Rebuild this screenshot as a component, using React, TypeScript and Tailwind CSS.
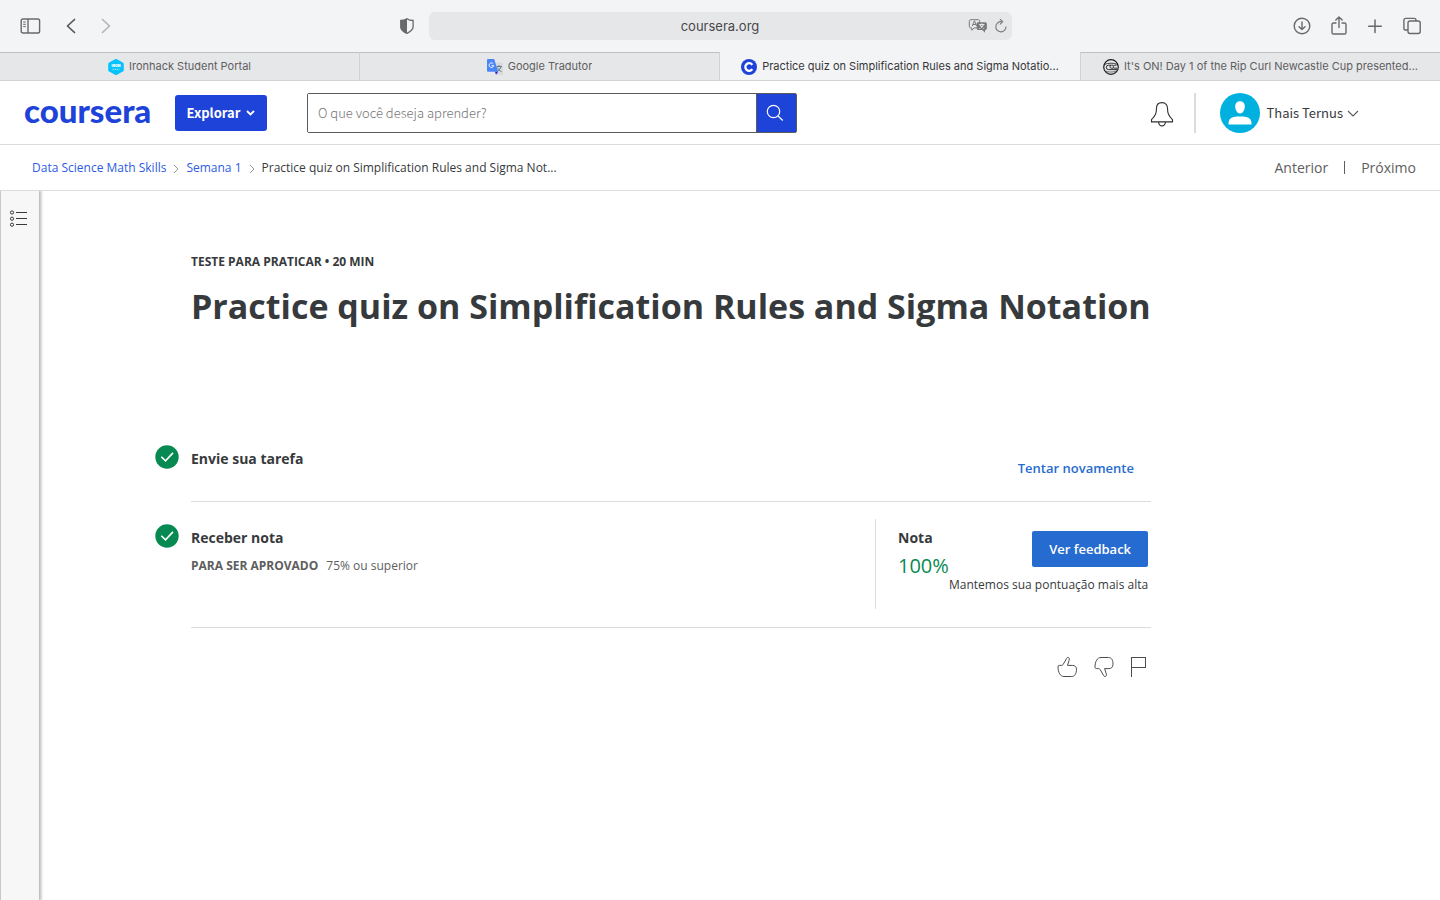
import type { ReactNode } from "react";

const openSans = "font-['Open_Sans','Noto_Sans',sans-serif]";
const sourceSans = "font-['Noto_Sans_CJK_JP','Open_Sans',sans-serif]";
const systemFont = "font-['Inter','Roboto',sans-serif]";

function IconButton({ label, className = "", children }: { label: string; className?: string; children: ReactNode }) {
  return (
    <button type="button" aria-label={label} className={`flex shrink-0 items-center justify-center ${className}`}>
      {children}
    </button>
  );
}

function Toolbar() {
  return (
    <div className="grid h-13 grid-cols-[1fr_583px_1fr] items-center bg-[#f3f4f6] px-5 text-[#69696b]">
      <div className="flex items-center pr-3.5">
        <IconButton label="Barra lateral">
          <svg width="21" height="16" viewBox="0 0 21 16" fill="none" stroke="currentColor" strokeWidth="1.4">
            <rect x="1.2" y="1" width="18.4" height="14" rx="1.8" />
            <path d="M8 1v14" />
            <path d="M3.2 4h2.6M3.2 6.3h2.6M3.2 8.6h2.6" strokeWidth="1" />
          </svg>
        </IconButton>
        <IconButton label="Voltar" className="ml-6">
          <svg width="12" height="16" viewBox="0 0 12 16" fill="none" stroke="#555" strokeWidth="1.7" strokeLinecap="round" strokeLinejoin="round">
            <path d="M9.5 1.5 2.5 8l7 6.5" />
          </svg>
        </IconButton>
        <IconButton label="Avançar" className="ml-6">
          <svg width="12" height="16" viewBox="0 0 12 16" fill="none" stroke="#b4b5b7" strokeWidth="1.7" strokeLinecap="round" strokeLinejoin="round">
            <path d="m1.5 1.5 7 6.5-7 6.5" />
          </svg>
        </IconButton>
        <IconButton label="Relatório de privacidade" className="ml-auto">
          <svg width="16" height="18" viewBox="0 0 16 18">
            <path d="M8 1.7C6.3 3 4.2 3.5 1.9 3.5v6.3c0 3 2.6 4.9 6.1 6.6 3.5-1.7 6.1-3.6 6.1-6.6V3.5C11.8 3.5 9.7 3 8 1.7Z" fill="none" stroke="currentColor" strokeWidth="1.3" />
            <path d="M8 1.2C6.3 2.6 4 3 1.3 3v7c0 3.2 3 5.3 6.7 7Z" fill="currentColor" />
          </svg>
        </IconButton>
      </div>
      <div className="relative flex h-7 items-center rounded-md bg-[#e6e7e9]">
        <input
          type="text"
          aria-label="Endereço"
          defaultValue="coursera.org"
          className="h-7 w-full bg-transparent text-center text-[13px] leading-5 text-[#48484a] outline-none"
        />
        <div className="absolute right-1 flex items-center gap-1.5 text-[#7a7a7c]">
          <IconButton label="Traduzir">
            <svg width="20" height="16" viewBox="0 0 20 16">
              <path d="M2.8 1.7h7.4c1 0 1.5.5 1.5 1.5v5.2c0 1-.5 1.5-1.5 1.5H6.3L3.8 12.200V9.9H2.8c-1 0-1.5-.5-1.5-1.5V3.2c0-1 .5-1.5 1.5-1.5Z" fill="none" stroke="currentColor" />
              <path d="m4.3 8 2.2-5.2L8.7 8M5 6.500h3" fill="none" stroke="currentColor" />
              <path d="M10 4.300h7c1.2 0 1.900.6 1.900 1.800v4.200c0 1.200-.7 1.800-1.900 1.800v2.600l-2.700-2.600H10.500c-1.200 0-1.800-.6-1.800-1.800V6.100c0-1.200.5-1.800 1.300-1.800Z" fill="currentColor" />
              <path d="M11.200 6.500h5.200M13.800 5.500v1M15.500 6.600c-.6 1.900-2 3.300-4.200 4M12 6.700c.6 1.900 2.200 3.200 4.200 3.900" fill="none" stroke="#e6e7e9" strokeWidth="1.1" />
            </svg>
          </IconButton>
          <IconButton label="Recarregar">
            <svg width="14" height="16" viewBox="0 0 14 16" fill="none" stroke="currentColor" strokeWidth="1.1" strokeLinecap="round" strokeLinejoin="round">
              <path d="M7.400 3.700A5.100 5.100 0 1 0 12 8.800" />
              <path d="m6.200 1.300 2.500 2.400-2.500 2.500" />
            </svg>
          </IconButton>
        </div>
      </div>
      <div className="-mr-0.5 flex items-center justify-end gap-[18px] pb-px">
        <IconButton label="Downloads">
          <svg width="20" height="20" viewBox="0 0 20 20" fill="none" stroke="currentColor" strokeWidth="1.4" strokeLinecap="round" strokeLinejoin="round">
            <circle cx="10" cy="10" r="7.8" />
            <path d="M10 6v7.500M7 10.700l3 2.900 3-2.900" />
          </svg>
        </IconButton>
        <IconButton label="Compartilhar">
          <svg width="18" height="22" viewBox="0 0 18 22" fill="none" stroke="currentColor" strokeWidth="1.4" strokeLinecap="round" strokeLinejoin="round">
            <path d="M6 8H3.600C2.600 8 2 8.600 2 9.600v7.800c0 1 .6 1.600 1.600 1.600h10.800c1 0 1.600-.6 1.600-1.600V9.600c0-1-.6-1.600-1.600-1.600H12M9 12.500V2.200M5.800 5 9 1.900 12.200 5" />
          </svg>
        </IconButton>
        <IconButton label="Nova aba">
          <svg width="18" height="18" viewBox="0 0 18 18" fill="none" stroke="currentColor" strokeWidth="1.5" strokeLinecap="round">
            <path d="M9 3v12.500M2.700 9.200h12.600" />
          </svg>
        </IconButton>
        <IconButton label="Visão geral das abas">
          <svg width="20" height="18" viewBox="0 0 20 18" fill="none" stroke="currentColor" strokeWidth="1.4">
            <rect x="6" y="4" width="12.200" height="12.500" rx="2" />
            <path d="M6 13H3.700c-1.200 0-1.800-.7-1.800-1.800V3.300c0-1.200.7-1.900 1.900-1.900h8.300c1.200 0 1.900.7 1.900 1.900V4" />
          </svg>
        </IconButton>
      </div>
    </div>
  );
}

function IronhackIcon() {
  return (
    <svg width="16" height="16" viewBox="0 0 16 16" className="shrink-0" aria-hidden="true">
      <path d="M7 .3q1-.5 2 0l5.800 3.200q1 .6 1 1.600v5.800q0 1-1 1.600L9 15.700q-1 .5-2 0l-5.800-3.200q-1-.6-1-1.600V5.100q0-1 1-1.600Z" fill="#06c3fb" />
      <text x="8" y="7.500" fill="#fff" fontFamily="Inter" fontSize="3.500" fontWeight="900" textAnchor="middle">IRON</text>
      <path d="M4.500 10.300h7" stroke="#9be7ff" strokeDasharray="1.5 .6" />
    </svg>
  );
}

function TranslateIcon() {
  return (
    <svg width="16" height="16" viewBox="0 0 16 16" className="shrink-0" aria-hidden="true">
      <path d="M6 3.500h9a1 1 0 0 1 1 1V15a1 1 0 0 1-1 1H9Z" fill="#d8dadc" />
      <path d="M9.500 7.500h5.500M12 6v1.500M14 7.500c-.6 2.300-2 4-4 5M10.500 8.500c.8 2 2 3.200 4 4" fill="none" stroke="#607d8b" />
      <path d="M1 0h6.200l4 12.800H1a1 1 0 0 1-1-1V1a1 1 0 0 1 1-1Z" fill="#4a86f7" />
      <path d="M8 12.800h3.200L9 15.800Z" fill="#3822d1" />
      <path d="M6.300 4.800A2.300 2.300 0 1 0 6.700 6.700H4.700" fill="none" stroke="#fff" strokeWidth="1" />
    </svg>
  );
}

function CourseraIcon() {
  return (
    <svg width="16" height="16" viewBox="0 0 16 16" className="shrink-0" aria-hidden="true">
      <circle cx="8" cy="8" r="8" fill="#1d43d8" />
      <path d="M11.300 5.900A3.800 3.800 0 1 0 11.300 10.100" fill="none" stroke="#fff" strokeWidth="2.3" />
    </svg>
  );
}

function LeagueIcon() {
  return (
    <svg width="16" height="16" viewBox="0 0 16 16" fill="none" stroke="#1c1c1e" className="shrink-0" aria-hidden="true">
      <circle cx="8" cy="8" r="7.300" strokeWidth="1.2" />
      <path d="M1.500 5.400C5 3.800 11 3.800 14.500 5.400" strokeWidth=".8" />
      <path d="M8 6.200H5.500a2.200 2.200 0 0 0 0 4.400H14M10.300 6.200H8.500a1.500 1.500 0 0 0 0 3h1.800M13.500 6.200h-1.700a1.500 1.500 0 0 0 0 3H14" strokeWidth=".9" />
      <path d="M2.500 12c2 1.300 8 1.500 11 0" strokeWidth=".6" />
    </svg>
  );
}

const tabs = [
  { title: "Ironhack Student Portal", icon: <IronhackIcon />, active: false },
  { title: "Google Tradutor", icon: <TranslateIcon />, active: false },
  { title: "Practice quiz on Simplification Rules and Sigma Notatio...", icon: <CourseraIcon />, active: true },
  { title: "It's ON! Day 1 of the Rip Curl Newcastle Cup presented...", icon: <LeagueIcon />, active: false },
];

function TabBar() {
  return (
    <div role="tablist" className="grid h-[29px] grid-cols-4 border-b border-[#d2d3d5]">
      {tabs.map((tab) => (
        <button
          key={tab.title}
          type="button"
          role="tab"
          aria-selected={tab.active}
          className={`flex min-w-0 items-center justify-center gap-[5px] border-t px-3 text-[11px] ${
            tab.active
              ? "border-[#f3f4f6] bg-[#f3f4f6] text-[#363638]"
              : "border-r border-t-[#bfc0c2] border-r-[#d0d1d3] bg-[#e6e7e9] text-[#5e5e60] last:border-r-0 last:border-l last:border-l-[#d0d1d3]"
          }`}
        >
          {tab.icon}
          <span className="truncate">{tab.title}</span>
        </button>
      ))}
    </div>
  );
}

function Header() {
  return (
    <header className={`flex h-16 items-center border-b border-[#dcdcdc] px-6 ${sourceSans}`}>
      <a href="#inicio" className="w-32 shrink-0 pb-1.5 font-['Lato',sans-serif] text-[33px] leading-8 font-black text-[#1d43d8]">
        coursera
      </a>
      <button type="button" className="ml-[23px] flex h-9 w-[92px] shrink-0 items-center justify-center gap-1.5 rounded-[3px] bg-[#1d43d8] text-[13px] font-bold text-white">
        Explorar
        <svg width="9" height="6" viewBox="0 0 9 6" fill="none" stroke="currentColor" strokeWidth="1.8" aria-hidden="true">
          <path d="m1 1 3.500 3.500L8 1" />
        </svg>
      </button>
      <form role="search" className="ml-10 flex h-10 w-[490px] rounded-[2px] border border-[#5b5b5b]">
        <input
          type="text"
          aria-label="Pesquisar"
          placeholder="O que você deseja aprender?"
          className="min-w-0 flex-1 bg-white px-2.5 text-[13px] leading-5 font-light text-[#373a3c] outline-none placeholder:text-[#757575]"
        />
        <button type="button" aria-label="Pesquisar" className="flex w-10 items-center justify-center border-l border-[#5b5b5b] bg-[#1d43d8]">
          <svg width="18" height="18" viewBox="0 0 18 18" fill="none" stroke="#fff" strokeWidth="1.2" className="-ml-1">
            <circle cx="7.500" cy="7.500" r="6.200" />
            <path d="m12 12 4.800 4.500" />
          </svg>
        </button>
      </form>
      <div className="ml-auto flex items-center pr-[57px]">
        <IconButton label="Notificações">
          <svg width="24" height="26" viewBox="0 0 24 26" fill="none" stroke="#2d2f31" strokeWidth="1.1" strokeLinejoin="round" className="mt-0.5">
            <path d="M12 1.600c-3.700 0-5.500 2.600-5.500 5.600 0 5.300-1.300 7.500-5 11.500v2.200h21v-2.200c-3.700-4-5-6.200-5-11.500 0-3-1.800-5.600-5.500-5.600Z" />
            <path d="M8.600 21c.2 2.500 1.600 3.900 3.400 3.900s3.200-1.400 3.400-3.900" />
          </svg>
        </IconButton>
        <div className="ml-5 h-10 w-0.5 bg-[#dcdcdc]" />
        <button type="button" className="ml-6 flex items-center text-[13px] text-[#373a3c]">
          <svg width="40" height="40" viewBox="0 0 40 40" aria-hidden="true">
            <circle cx="20" cy="20" r="20" fill="#00b1df" />
            <path d="M20 8.300c3.300 0 4.800 2.300 4.800 5.200 0 3.600-2 7-4.800 7s-4.800-3.400-4.800-7c0-2.900 1.500-5.200 4.800-5.200Z" fill="#fff" />
            <path d="M8.500 31.500c0-5.500 1.600-8 11.500-8s11.500 2.500 11.500 8Z" fill="#fff" />
          </svg>
          <span className="ml-1.5">Thais Ternus</span>
          <svg width="12" height="8" viewBox="0 0 12 8" fill="none" stroke="#5b5b5b" strokeWidth="1.1" className="mt-0.5 ml-1" aria-hidden="true">
            <path d="m1 1 5 5 5-5" />
          </svg>
        </button>
      </div>
    </header>
  );
}

function Separator() {
  return (
    <svg width="6" height="10" viewBox="0 0 6 10" fill="none" stroke="#9a9a9a" className="mt-0.5" aria-hidden="true">
      <path d="m1 1 4 4-4 4" />
    </svg>
  );
}

function Breadcrumbs() {
  return (
    <nav className="flex h-[46px] items-center justify-between border-b border-[#dcdcdc] pr-6 pl-8 text-xs text-[#373a3c]">
      <div className="flex items-center gap-[7px]">
        <a href="#curso" className="text-[#2d5be3]">Data Science Math Skills</a>
        <Separator />
        <a href="#semana-1" className="text-[#2d5be3]">Semana 1</a>
        <Separator />
        <span>Practice quiz on Simplification Rules and Sigma Not...</span>
      </div>
      <div className="flex items-center gap-4 text-sm text-[#5e5e5e]">
        <a href="#anterior">Anterior</a>
        <span className="h-[13px] w-px bg-[#5e5e5e]" />
        <a href="#proximo">Próximo</a>
      </div>
    </nav>
  );
}

function CheckCircle() {
  return (
    <svg width="24" height="24" viewBox="0 0 24 24" className="shrink-0" aria-hidden="true">
      <circle cx="12" cy="12" r="11.700" fill="#078a52" />
      <path d="m6.300 11.700 4.200 4.100 7.500-7.900" fill="none" stroke="#fff" strokeWidth="1.6" />
    </svg>
  );
}

function Feedback() {
  return (
    <div className="flex justify-end gap-[17px] pt-7 pr-1 text-[#4a4d4f]">
      <IconButton label="Gostei">
        <svg width="20" height="22" viewBox="0 0 20 22" fill="none" stroke="currentColor" strokeLinejoin="round">
          <path d="M1 10.800c0-.9.400-1.400 1.300-1.400h2c1 0 1.500-.3 2-1.200l3.200-5.500C10 1.500 10.800 1 11.600 1.500c1 .6.700 2 .4 3.200l-1.500 4.700h5c2.200 0 4 1.300 4 3.700 0 4.800-1.900 7.400-5 7.400H7C3.300 20.500 1 16.500 1 10.800Z" />
        </svg>
      </IconButton>
      <IconButton label="Não gostei">
        <svg width="20" height="22" viewBox="0 0 20 22" fill="none" stroke="currentColor" strokeLinejoin="round">
          <path d="M1 11c0 1 .4 1.600 1.300 1.600h2c1 0 1.500.3 2 1.200l3.200 5.500c.6 1.200 1.400 1.600 2.200 1.100 1-.6.700-2 .4-3.200l-1.500-4.600h4.300c2.300 0 4.100-1.400 4.100-4.300 0-4.300-1.400-6.800-4.600-6.800H7C3.300 1.500 1 5.500 1 11Z" />
        </svg>
      </IconButton>
      <IconButton label="Denunciar">
        <svg width="16" height="22" viewBox="0 0 16 22" fill="none" stroke="currentColor" shapeRendering="crispEdges">
          <path d="M.5 21V1.500h14v10H.5" />
        </svg>
      </IconButton>
    </div>
  );
}

export default function App() {
  return (
    <div className={`flex min-h-screen flex-col bg-white ${openSans}`}>
      <div className={systemFont}>
        <Toolbar />
        <TabBar />
      </div>
      <Header />
      <Breadcrumbs />
      <div className="flex flex-1">
        <aside className="w-[39px] shrink-0 border-l border-[#c8c8c8] bg-[#f7f7f7] pt-[18px] pl-2 shadow-[1px_0_3px_1px_rgba(0,0,0,0.3)] [clip-path:inset(0_-6px_0_0)]">
          <IconButton label="Menu do curso">
            <svg width="20" height="19" viewBox="0 0 20 19" fill="none" stroke="#373a3c">
              <circle cx="3" cy="3.500" r="1.600" />
              <circle cx="3" cy="9.700" r="1.600" />
              <circle cx="3" cy="15.700" r="1.600" />
              <path d="M7 3.500h11M7 9.500h11M7 15.500h11" />
            </svg>
          </IconButton>
        </aside>
        <main className="min-w-0 flex-1 pt-[62px] pr-6 pl-[116px] text-[#373a3c]">
          <div className="max-w-[996px]">
            <div className="pl-9">
              <p className="text-xs leading-[18px] font-bold">TESTE PARA PRATICAR • 20 MIN</p>
              <h1 className="mt-3 text-[34px] leading-[46px] font-bold">
                Practice quiz on Simplification Rules and Sigma Notation
              </h1>
            </div>

            <section className="mt-[116px] flex gap-3">
              <CheckCircle />
              <div className="flex h-[57px] flex-1 items-start justify-between border-b border-[#dcdcdc]">
                <h2 className="pt-1 text-sm leading-5 font-bold">Envie sua tarefa</h2>
                <button type="button" className="mt-[13px] mr-[17px] text-[13px] leading-5 font-semibold text-[#266bd0]">
                  Tentar novamente
                </button>
              </div>
            </section>

            <section className="mt-[22px] flex gap-3">
              <CheckCircle />
              <div className="-mt-[5px] flex flex-1 justify-between border-b border-[#dcdcdc] pb-[18px]">
                <div className="pt-[9px]">
                  <h2 className="text-sm leading-5 font-bold">Receber nota</h2>
                  <p className="mt-2 flex gap-2 text-xs leading-5 text-[#5e5e5e]">
                    <strong>PARA SER APROVADO</strong>
                    <span>75% ou superior</span>
                  </p>
                </div>
                <div className="flex h-[90px] w-[276px] justify-between border-l border-[#dcdcdc] pr-[3px] pl-[22px]">
                  <div className="w-[51px] shrink-0 pt-[9px]">
                    <h2 className="text-sm leading-5 font-bold">Nota</h2>
                    <p className="mt-1 text-xl leading-7 text-[#078a52]">100%</p>
                  </div>
                  <div className="flex flex-col items-end pt-3">
                    <button type="button" className="h-9 w-[116px] rounded-[2px] bg-[#266bd0] pt-0.5 text-[13px] font-semibold text-white">
                      Ver feedback
                    </button>
                    <p className="mt-2 text-xs leading-5 whitespace-nowrap">Mantemos sua pontuação mais alta</p>
                  </div>
                </div>
              </div>
            </section>

            <Feedback />
          </div>
        </main>
      </div>
    </div>
  );
}
